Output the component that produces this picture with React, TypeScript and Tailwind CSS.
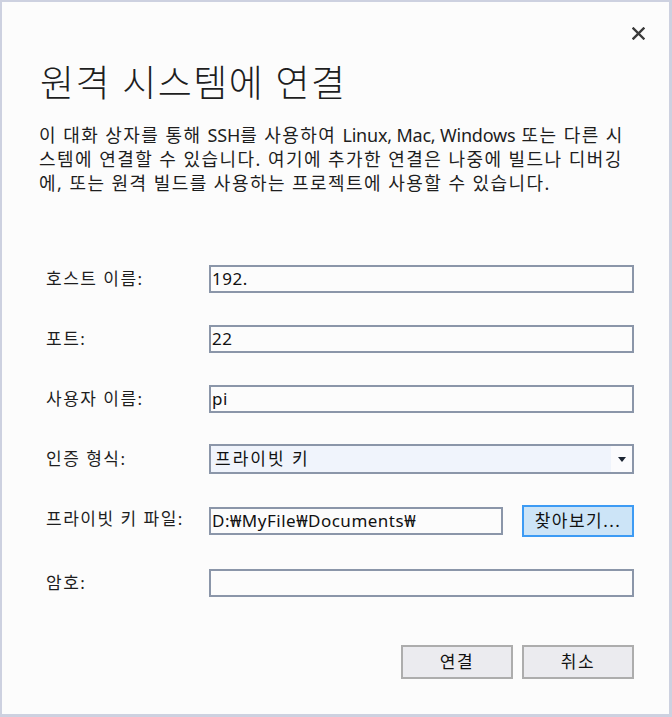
import React from "react";

const font = { fontFamily: '"Noto Sans", "Noto Sans CJK KR", sans-serif' };

function Field({ value, w = "w-[425px]" }: { value: string; w?: string }) {
  return (
    <div className={`${w} h-[28px] border-2 border-[#8b96a9] bg-[#fcfcfc] flex items-center pl-[1px] text-[17px] tracking-[0.5px] text-[#111]`}>
      {value}
    </div>
  );
}

function Label({ children }: { children: React.ReactNode }) {
  return <div className="h-[28px] flex items-center text-[17px] tracking-[1.5px] text-[#1e1e1e]">{children}</div>;
}

const L = ({ children }: { children: React.ReactNode }) => <span className="tracking-[-0.2px]">{children}</span>;

export default function App() {
  return (
    <div
      style={font}
      className="relative w-[672px] h-[717px] box-border bg-[#fcfcfc] border-l-2 border-t-2 border-r-[3px] border-b-[3px] border-[#cdd1e0] flex flex-col"
    >
      <div className="absolute top-[23px] right-[23px] w-[16px] h-[16px] flex items-center justify-center">
        <svg width="13" height="13" viewBox="0 0 13 13">
          <path d="M1.5 1.5 L11.5 11.5 M11.5 1.5 L1.5 11.5" stroke="#3a3a3a" strokeWidth="2.4" strokeLinecap="square" />
        </svg>
      </div>

      <div className="pl-[38px] pt-[56px] text-[37px] leading-[50px] font-light text-[#1e1e1e] tracking-[1.5px]">
        원격 시스템에 연결
      </div>

      <div className="pl-[37px] pt-[15px] text-[18px] leading-[24px] text-[#1e1e1e] tracking-[1.45px]">
        이 대화 상자를 통해 <L>SSH</L>를 사용하여 <L>Linux, Mac, Windows</L> 또는 다른 시<br />
        스템에 연결할 수 있습니다. 여기에 추가한 연결은 나중에 빌드나 디버깅<br />
        에, 또는 원격 빌드를 사용하는 프로젝트에 사용할 수 있습니다.
      </div>

      <div className="grid grid-cols-[163px_auto] gap-y-[32px] pl-[44px] pt-[70px]">
        <Label>호스트 이름:</Label>
        <Field value="192." />
        <Label>포트:</Label>
        <Field value="22" />
        <Label>사용자 이름:</Label>
        <Field value="pi" />
        <Label>인증 형식:</Label>
        <div className="w-[425px] h-[30px] -my-px border-2 border-[#8b96a9] bg-[#fbfbfd] flex">
          <div className="flex-1 bg-[#f0f4fc] flex items-center pl-[4px] text-[17px] tracking-[2px] text-[#111]">프라이빗 키</div>
          <div className="w-[21px] flex items-center justify-center">
            <svg width="8" height="5" viewBox="0 0 8 5">
              <path d="M0 0 H8 L4 5 Z" fill="#1b2433" />
            </svg>
          </div>
        </div>
        <Label>프라이빗 키 파일:</Label>
        <div className="flex items-center gap-[19px]">
          <Field value="D:₩MyFile₩Documents₩" w="w-[294px]" />
          <div className="w-[112px] h-[32px] border-2 border-[#3d9bf4] bg-[#cce4f7] flex items-center justify-center text-[17px] tracking-[1.5px] text-[#111]">
            찾아보기...
          </div>
        </div>
        <Label>암호:</Label>
        <Field value="" />
      </div>

      <div className="flex justify-end gap-[9px] pr-[35px] pt-[48px]">
        <div className="w-[112px] h-[34px] border-2 border-[#adadad] bg-[#ebebef] flex items-center justify-center text-[17px] tracking-[1.5px] text-[#111]">
          연결
        </div>
        <div className="w-[112px] h-[34px] border-2 border-[#adadad] bg-[#ebebef] flex items-center justify-center text-[17px] tracking-[1.5px] text-[#111]">
          취소
        </div>
      </div>
    </div>
  );
}
